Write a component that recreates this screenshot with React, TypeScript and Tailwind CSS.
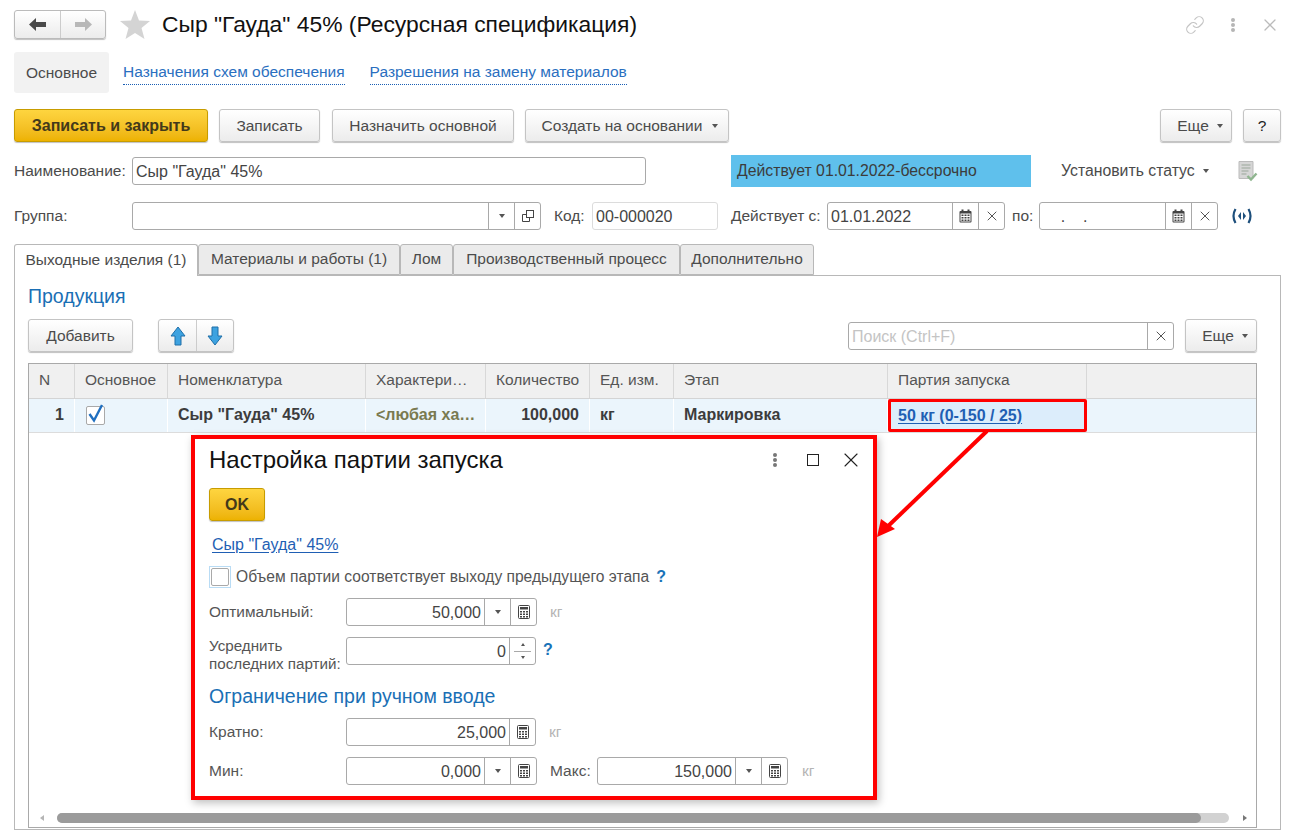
import { Link, X } from 'lucide-react';
import type { ReactNode } from 'react';

const Caret = ({ className = 'border-t-[#555]' }: { className?: string }) => (
  <span className={`inline-block h-0 w-0 border-x-[3px] border-t-[4px] border-x-transparent ${className}`} />
);

const Dots = ({ color = 'bg-[#b5b5b5]' }: { color?: string }) => (
  <span className="flex flex-col gap-[1px]">
    <span className={`h-[4px] w-[4px] rounded-full ${color}`} />
    <span className={`h-[4px] w-[4px] rounded-full ${color}`} />
    <span className={`h-[4px] w-[4px] rounded-full ${color}`} />
  </span>
);

const CalendarIcon = () => (
  <svg width="13" height="14" viewBox="0 0 13 14">
    <rect x="0.5" y="2" width="12" height="11.5" rx="1" fill="#444" />
    <rect x="2.5" y="0.5" width="2" height="3" fill="#444" />
    <rect x="8.5" y="0.5" width="2" height="3" fill="#444" />
    <rect x="1.5" y="4.5" width="10" height="8" fill="#fff" />
    <path d="M2.5 5.5h2v1.5h-2zM5.5 5.5h2v1.5h-2zM8.5 5.5h2v1.5h-2zM2.5 8h2v1.5h-2zM5.5 8h2v1.5h-2zM8.5 8h2v1.5h-2zM2.5 10.5h2V12h-2zM5.5 10.5h2V12h-2zM8.5 10.5h2V12h-2z" fill="#444" />
  </svg>
);

const CalcIcon = () => (
  <svg width="12" height="14" viewBox="0 0 12 14">
    <rect x="0.5" y="0.5" width="11" height="13" rx="1" fill="#fff" stroke="#444" />
    <rect x="2" y="2" width="8" height="2.5" fill="#444" />
    <path d="M2 6h2v1.5H2zM5 6h2v1.5H5zM8 6h2v1.5H8zM2 8.5h2V10H2zM5 8.5h2V10H5zM8 8.5h2V10H8zM2 11h2v1.5H2zM5 11h2v1.5H5zM8 11h2v1.5H8z" fill="#444" />
  </svg>
);

const CopyIcon = () => (
  <svg width="12" height="12" viewBox="0 0 12 12" fill="none" stroke="#444">
    <rect x="4.5" y="0.5" width="7" height="7" fill="#fff" />
    <path d="M4.5 4.5H0.5V11.5H7.5V7.5" />
  </svg>
);

const NavArrow = ({ color, flip }: { color: string; flip?: boolean }) => (
  <svg width="17" height="13" viewBox="0 0 17 13" className={flip ? '-scale-x-100' : ''}>
    <path d="M0 6.5L7 0V4H17V9H7V13Z" fill={color} />
  </svg>
);

const SmallX = () => <X size={16} strokeWidth={1.5} className="text-[#555]" />;

function Btn({ w, h = 'h-[33px]', primary, children }: { w: string; h?: string; primary?: boolean; children: ReactNode }) {
  return (
    <div
      className={`${w} ${h} flex shrink-0 items-center justify-center rounded-[3px] border shadow-[0_1px_1px_rgba(0,0,0,0.25)] ${
        primary
          ? 'border-[#c79c00] bg-linear-to-b from-[#fed53f] to-[#edb200] text-[16px] font-bold text-[#43391a]'
          : 'border-[#c4c4c4] bg-linear-to-b from-white to-[#ececec] text-[15.5px] text-[#4b4b4b]'
      }`}
    >
      {children}
    </div>
  );
}

const MoreBtn = () => (
  <Btn w="w-[72px]">
    <span className="ml-[8px]">Еще</span>
    <span className="ml-[8px] flex"><Caret /></span>
  </Btn>
);

function Field({
  w,
  value,
  placeholder,
  right,
  light,
  parts = [],
  partW = 'w-[26px]',
}: {
  w: string;
  value?: string;
  placeholder?: string;
  right?: boolean;
  light?: boolean;
  parts?: ReactNode[];
  partW?: string;
}) {
  return (
    <div className={`${w} flex h-[28px] shrink-0 rounded-[3px] border bg-white ${light ? 'border-[#dcdcdc]' : 'border-[#a9a9a9]'}`}>
      <div className={`min-w-0 flex-1 truncate whitespace-pre px-[3px] text-[16px] leading-[27px] ${placeholder ? 'text-[#c4c4c4]' : 'text-[#444]'} ${right ? 'text-right' : ''}`}>
        {value ?? placeholder}
      </div>
      {parts.map((p, i) => (
        <div key={i} className={`flex ${partW} shrink-0 items-center justify-center border-l border-[#a9a9a9]`}>
          {p}
        </div>
      ))}
    </div>
  );
}

const columns = [
  { title: 'N', w: 'w-[46px]' },
  { title: 'Основное', w: 'w-[93px]' },
  { title: 'Номенклатура', w: 'w-[198px]' },
  { title: 'Характери…', w: 'w-[120px]' },
  { title: 'Количество', w: 'w-[104px]' },
  { title: 'Ед. изм.', w: 'w-[84px]' },
  { title: 'Этап', w: 'w-[214px]' },
  { title: 'Партия запуска', w: 'w-[199px]' },
];

const tabs = [
  { title: 'Выходные изделия (1)', w: 'w-[184px]', active: true },
  { title: 'Материалы и работы (1)', w: 'w-[202px]' },
  { title: 'Лом', w: 'w-[53px]' },
  { title: 'Производственный процесс', w: 'w-[227px]' },
  { title: 'Дополнительно', w: 'w-[134px]' },
];

function SettingsDialog() {
  const spinner = (
    <div className="flex h-full w-full flex-col">
      <div className="mx-[4px] flex flex-1 items-center justify-center border-b border-[#a9a9a9]">
        <span className="h-0 w-0 border-x-[2.5px] border-b-[3px] border-x-transparent border-b-[#555]" />
      </div>
      <div className="flex flex-1 items-center justify-center">
        <span className="h-0 w-0 border-x-[2.5px] border-t-[3px] border-x-transparent border-t-[#555]" />
      </div>
    </div>
  );

  return (
    <div className="absolute left-[191px] top-[435px] flex h-[365px] w-[686px] flex-col border-4 border-[#f00] bg-white pl-[14px] pt-[8px] text-[#555] shadow-[2px_3px_8px_rgba(0,0,0,0.25)]">
      <div className="flex h-[26px] items-center">
        <div className="flex-1 text-[24px] text-[#111]">Настройка партии запуска</div>
        <Dots color="bg-[#777]" />
        <span className="ml-[30px] h-[12px] w-[12px] border border-[#222]" />
        <X size={24} strokeWidth={1.1} className="ml-[20px] mr-[10px] text-[#222]" />
      </div>
      <div className="mt-[15px]">
        <Btn w="w-[56px]" primary>OK</Btn>
      </div>
      <div className="ml-[3px] mt-[16px] h-[17px] text-[16px] leading-[16px] text-[#1f5fb4] underline underline-offset-2">Сыр "Гауда" 45%</div>
      <div className="mt-[12px] flex h-[22px] items-center">
        <span className="flex h-[22px] w-[22px] items-center justify-center border border-[#b9dcf5]">
          <span className="h-[18px] w-[18px] rounded-[2px] border border-[#a9a9a9]" />
        </span>
        <span className="ml-[5px] text-[15.6px]">Объем партии соответствует выходу предыдущего этапа</span>
        <span className="ml-[7px] text-[16px] font-bold text-[#1a73b8]">?</span>
      </div>
      <div className="mt-[10px] flex items-center">
        <span className="w-[137px] text-[15.4px]">Оптимальный:</span>
        <Field w="w-[191px]" value="50,000" right parts={[<Caret />, <CalcIcon />]} />
        <span className="ml-[13px] text-[15.5px] text-[#b5b5b5]">кг</span>
      </div>
      <div className="mt-[11px] flex h-[28px] items-start">
        <span className="w-[137px] whitespace-nowrap text-[15.2px] leading-[18px]">
          Усреднить
          <br />
          последних партий:
        </span>
        <Field w="w-[190px]" value="0" right partW="w-[26px]" parts={[spinner]} />
        <span className="ml-[7px] text-[16px] font-bold leading-[26px] text-[#1a73b8]">?</span>
      </div>
      <div className="mt-[21px] h-[21px] text-[19.5px] leading-[21px] text-[#1a6fb5]">Ограничение при ручном вводе</div>
      <div className="mt-[11px] flex items-center">
        <span className="w-[137px] text-[15.5px]">Кратно:</span>
        <Field w="w-[190px]" value="25,000" right parts={[<CalcIcon />]} />
        <span className="ml-[13px] text-[15.5px] text-[#b5b5b5]">кг</span>
      </div>
      <div className="mt-[11px] flex items-center">
        <span className="w-[137px] text-[15.5px]">Мин:</span>
        <Field w="w-[191px]" value="0,000" right parts={[<Caret />, <CalcIcon />]} />
        <span className="ml-[13px] w-[47px] text-[15.5px]">Макс:</span>
        <Field w="w-[191px]" value="150,000" right parts={[<Caret />, <CalcIcon />]} />
        <span className="ml-[14px] text-[15.5px] text-[#b5b5b5]">кг</span>
      </div>
    </div>
  );
}

export default function App() {
  return (
    <div className="relative flex h-[830px] w-[1293px] flex-col overflow-hidden bg-white pt-[10px] font-['Liberation_Sans',Arial,sans-serif] text-[15.5px] text-[#4b4b4b]">
      {/* шапка формы */}
      <div className="flex h-[42px] shrink-0 items-start pl-[14px]">
        <div className="flex h-[29px] w-[92px] rounded-[3px] border border-[#bbb] bg-linear-to-b from-white to-[#ececec] shadow-[0_1px_1px_rgba(0,0,0,0.25)]">
          <div className="flex w-[46px] items-center justify-center border-r border-[#ccc]">
            <NavArrow color="#4a4a4a" />
          </div>
          <div className="flex flex-1 items-center justify-center">
            <NavArrow color="#b8b8b8" flip />
          </div>
        </div>
        <svg width="30" height="29" viewBox="0 0 30 29" className="ml-[14px]">
          <polygon points="15,0 19,10.5 30,11 21.5,18 24.5,29 15,23 5.5,29 8.5,18 0,11 11,10.5" fill="#d4d4d4" />
        </svg>
        <div className="ml-[12px] text-[22.85px] leading-[29px] text-[#111]">Сыр "Гауда" 45% (Ресурсная спецификация)</div>
        <div className="ml-auto flex h-[29px] items-center pr-[13px]">
          <Link size={20} strokeWidth={1.4} className="text-[#c4c4c4]" />
          <span className="ml-[26px]"><Dots /></span>
          <X size={20} strokeWidth={1.5} className="ml-[25px] text-[#bbb]" />
        </div>
      </div>

      {/* панель навигации */}
      <div className="flex h-[41px] shrink-0 items-center pl-[14px]">
        <div className="flex h-[41px] w-[95px] items-center justify-center rounded-[3px] bg-[#f2f2f2]">Основное</div>
        <span className="ml-[14px] border-b border-dotted border-[#1a5fb4] text-[#2a6fc0]">Назначения схем обеспечения</span>
        <span className="ml-[25px] border-b border-dotted border-[#1a5fb4] text-[#2a6fc0]">Разрешения на замену материалов</span>
      </div>

      {/* командная панель */}
      <div className="mt-[16px] flex shrink-0 pl-[14px]">
        <Btn w="w-[194px]" primary>Записать и закрыть</Btn>
        <div className="ml-[11px]"><Btn w="w-[101px]">Записать</Btn></div>
        <div className="ml-[12px]"><Btn w="w-[182px]">Назначить основной</Btn></div>
        <div className="ml-[11px]">
          <Btn w="w-[204px]">
            <span className="ml-[6px]">Создать на основании</span>
            <span className="ml-[10px] flex"><Caret /></span>
          </Btn>
        </div>
        <div className="ml-[431px]"><MoreBtn /></div>
        <div className="ml-[11px]"><Btn w="w-[38px]"><span className="text-[#222]">?</span></Btn></div>
      </div>

      {/* реквизиты */}
      <div className="mt-[13px] flex h-[32px] shrink-0 items-center pl-[14px]">
        <span className="w-[118px]">Наименование:</span>
        <Field w="w-[514px]" value={'Сыр "Гауда" 45%'} />
        <div className="ml-[85px] flex h-[32px] w-[300px] items-center bg-[#5fc0ec] pl-[6px] text-[15.8px] text-[#3c3c3c]">Действует 01.01.2022-бессрочно</div>
        <span className="ml-[30px] text-[15.8px]">Установить статус</span>
        <span className="ml-[8px] flex"><Caret /></span>
        <svg width="20" height="21" viewBox="0 0 20 21" className="ml-[29px]">
          <path d="M1 0.5h14v17H1z" fill="#d6d6d6" stroke="#bbb" />
          <path d="M3.5 4h9M3.5 7h9M3.5 10h7M3.5 13h5" stroke="#9aa79a" />
          <path d="M9.5 15l3.5 3.5 5.5-6" fill="none" stroke="#8fb58f" strokeWidth="2.4" />
        </svg>
      </div>
      <div className="mt-[15px] flex shrink-0 items-center pl-[14px]">
        <span className="w-[118px]">Группа:</span>
        <Field w="w-[409px]" parts={[<Caret />, <CopyIcon />]} />
        <span className="ml-[13px] w-[38px]">Код:</span>
        <Field w="w-[126px]" value="00-000020" light />
        <span className="ml-[13px] w-[96px] whitespace-nowrap">Действует с:</span>
        <Field w="w-[178px]" value="01.01.2022" parts={[<CalendarIcon />, <SmallX />]} />
        <span className="ml-[7px] w-[27px]">по:</span>
        <Field w="w-[179px]" value="    .    ." parts={[<CalendarIcon />, <SmallX />]} />
        <svg width="20" height="16" viewBox="0 0 20 16" className="ml-[14px]" fill="none" stroke="#1d4f7c" strokeWidth="2.2">
          <path d="M3.5 1Q-0.5 8 3.5 15M16.5 1q4 7 0 14" />
          <path d="M9 8l-3-0 3-4zM9 8l-3 0 3 4zM11 8l3 0-3-4zM11 8l3 0-3 4z" fill="#1d4f7c" stroke="none" />
        </svg>
      </div>

      {/* закладки */}
      <div className="mt-[14px] flex h-[31px] shrink-0 pl-[14px]">
        {tabs.map((t) => (
          <div
            key={t.title}
            className={`${t.w} relative z-10 flex items-center justify-center whitespace-nowrap rounded-t-[3px] border border-[#b8b8b8] pb-[2px] ${
              t.active ? 'h-[32px] border-b-0 bg-white' : 'h-[31px] bg-[#ebebeb]'
            }`}
          >
            {t.title}
          </div>
        ))}
      </div>
      <div className="ml-[14px] flex w-[1267px] flex-1 flex-col border border-[#b8b8b8] pl-[13px] pr-[23px]">
        <div className="mt-[10px] h-[21px] text-[19.5px] leading-[21px] text-[#1a6fb5]">Продукция</div>
        <div className="mt-[12px] flex items-center">
          <Btn w="w-[105px]">Добавить</Btn>
          <div className="ml-[25px] flex h-[33px] w-[76px] rounded-[3px] border border-[#c4c4c4] bg-linear-to-b from-white to-[#ececec] shadow-[0_1px_1px_rgba(0,0,0,0.25)]">
            <div className="flex w-[38px] items-center justify-center border-r border-[#ccc]">
              <svg width="16" height="20" viewBox="0 0 16 20">
                <path d="M8 1l7 9h-4v9H5v-9H1z" fill="#3da2e0" stroke="#1f6fa8" />
              </svg>
            </div>
            <div className="flex flex-1 items-center justify-center">
              <svg width="16" height="20" viewBox="0 0 16 20">
                <path d="M8 19l7-9h-4V1H5v9H1z" fill="#3da2e0" stroke="#1f6fa8" />
              </svg>
            </div>
          </div>
          <div className="ml-[614px]">
            <Field w="w-[326px]" placeholder="Поиск (Ctrl+F)" parts={[<SmallX />]} />
          </div>
          <div className="ml-[11px]"><MoreBtn /></div>
        </div>
        <div className="mt-[11px] flex h-[465px] w-[1229px] shrink-0 flex-col border border-[#a9a9a9]">
          <div className="flex h-[35px] border-b border-[#d4d4d4] bg-[#f0f0f0] text-[#555]">
            {columns.map((c) => (
              <div key={c.title} className={`${c.w} flex shrink-0 items-center whitespace-nowrap border-r border-[#d8d8d8] pb-[2px] pl-[10px]`}>
                {c.title}
              </div>
            ))}
          </div>
          <div className="flex h-[34px] whitespace-nowrap border-b border-[#dcdcdc] bg-[#ebf5fc] text-[16px] font-bold text-[#3c3c3c]">
            <div className="w-[46px] shrink-0 border-r border-white pr-[10px] text-right leading-[31px]">1</div>
            <div className="flex w-[93px] shrink-0 items-center border-r border-white pl-[11px]">
              <span className="flex h-[19px] w-[19px] items-center justify-center rounded-[2px] border border-[#a9a9a9] bg-white">
                <svg width="17" height="20" viewBox="0 0 17 20" className="-mt-[3px]" fill="none" stroke="#1f6fc0" strokeWidth="2.4">
                  <path d="M2.5 10L7 16.5 15 1" />
                </svg>
              </span>
            </div>
            <div className="w-[198px] shrink-0 border-r border-white pl-[10px] leading-[31px]">Сыр "Гауда" 45%</div>
            <div className="w-[120px] shrink-0 border-r border-white pl-[10px] leading-[31px] text-[#7a7a50]">&lt;любая ха…</div>
            <div className="w-[104px] shrink-0 border-r border-white pr-[10px] text-right leading-[31px]">100,000</div>
            <div className="w-[84px] shrink-0 border-r border-white pl-[10px] leading-[31px]">кг</div>
            <div className="w-[214px] shrink-0 border-r border-white pl-[10px] leading-[31px]">Маркировка</div>
            <div className="flex w-[199px] shrink-0 items-center rounded-[2px] border-[3px] border-[#f00] bg-[#dcedfb] pl-[7px] text-[#1f5fb4] underline underline-offset-2">
              50 кг (0-150 / 25)
            </div>
          </div>
          <div className="mt-auto mb-[4px] flex h-[10px] items-center">
            <span className="ml-[11px] h-0 w-0 border-y-[3px] border-r-[4px] border-y-transparent border-r-[#b5b5b5]" />
            <div className="ml-[13px] flex h-[10px] w-[1172px] rounded-full bg-[#d2d2d2]">
              <div className="h-full w-[1144px] rounded-full bg-[#9b9b9b]" />
            </div>
            <span className="ml-[14px] h-0 w-0 border-y-[3px] border-l-[4px] border-y-transparent border-l-[#777]" />
          </div>
        </div>
      </div>

      <SettingsDialog />

      {/* стрелка-выноска */}
      <svg width="130" height="120" viewBox="870 425 130 120" className="absolute left-[870px] top-[425px]">
        <path d="M987 431L884 530" stroke="#f00" strokeWidth="4" fill="none" />
        <polygon points="877,537 881,519 895,529" fill="#f00" />
      </svg>
    </div>
  );
}
